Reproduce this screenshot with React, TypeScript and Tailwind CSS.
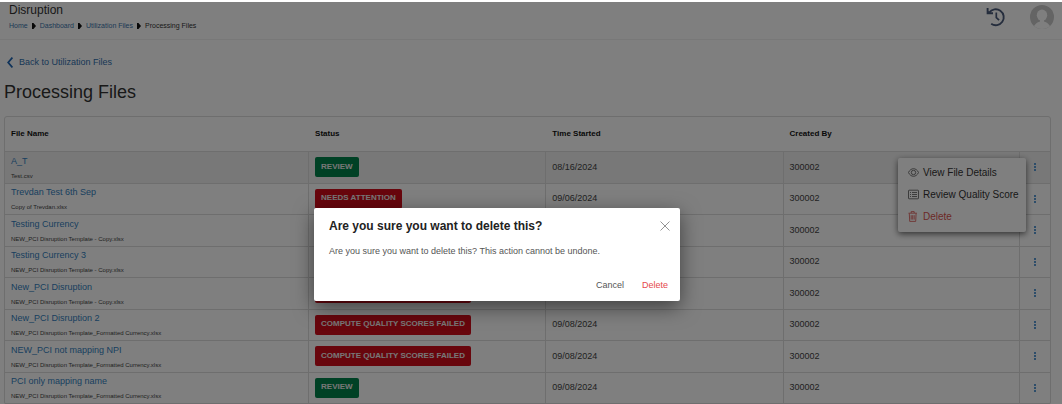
import React from "react";

type Status = "REVIEW" | "NEEDS ATTENTION" | "COMPUTE QUALITY SCORES FAILED";

interface FileRow {
  name: string;
  file: string;
  status?: Status;
  started?: string;
}

const copyFile = "NEW_PCI Disruption Template - Copy.xlsx";
const currencyFile = "NEW_PCI Disruption Template_Formatted Currency.xlsx";

const rows: FileRow[] = [
  { name: "A_T", file: "Test.csv", status: "REVIEW", started: "08/16/2024" },
  { name: "Trevdan Test 6th Sep", file: "Copy of Trevdan.xlsx", status: "NEEDS ATTENTION", started: "09/06/2024" },
  { name: "Testing Currency", file: copyFile },
  { name: "Testing Currency 3", file: copyFile },
  { name: "New_PCI Disruption", file: copyFile, status: "COMPUTE QUALITY SCORES FAILED" },
  { name: "New_PCI Disruption 2", file: currencyFile, status: "COMPUTE QUALITY SCORES FAILED", started: "09/08/2024" },
  { name: "NEW_PCI not mapping NPI", file: currencyFile, status: "COMPUTE QUALITY SCORES FAILED", started: "09/08/2024" },
  { name: "PCI only mapping name", file: currencyFile, status: "REVIEW", started: "09/08/2024" },
];

function HistoryIcon() {
  return (
    <svg viewBox="0 0 20 20" className="h-5 w-5" fill="none" stroke="#4a5b7a" strokeWidth="1.9">
      <path d="M3.200 5.600A8 8 0 1 1 5.200 16.800" />
      <path d="M1.600 1v5.200h5.400" />
      <path d="M1.600 3.200l3 3h-3z" fill="#4a5b7a" stroke="none" />
      <path d="M10.300 5.600v5l2.800 2.600" strokeWidth="1.700" />
    </svg>
  );
}

function Avatar() {
  return (
    <svg viewBox="0 0 24 24" className="h-6 w-6">
      <defs>
        <clipPath id="avatar-clip">
          <circle cx="12" cy="12" r="12" />
        </clipPath>
      </defs>
      <g clipPath="url(#avatar-clip)">
        <rect width="24" height="24" fill="#c8c8c8" />
        <ellipse cx="12" cy="10.200" rx="5.200" ry="5.600" fill="#fff" />
        <path d="M3 24c.6-4 3.500-6.500 7-7.500v-3h4v3c3.500 1 6.400 3.500 7 7.500z" fill="#fff" />
      </g>
    </svg>
  );
}

function Separator() {
  return (
    <svg viewBox="0 0 4 6" className="h-[6px] w-1" aria-hidden="true">
      <path d="M0 0h1.500L4 3 1.500 6H0z" fill="#111" />
    </svg>
  );
}

function EyeIcon() {
  return (
    <svg viewBox="0 0 11 11" className="h-[11px] w-[11px] shrink-0" fill="none" stroke="#555" strokeWidth="0.8">
      <path d="M.4 5.500C1.800 2.900 3.500 1.700 5.500 1.700S9.200 2.900 10.600 5.500C9.200 8.100 7.500 9.300 5.500 9.300S1.800 8.100.4 5.500z" />
      <circle cx="5.500" cy="5.500" r="2.200" />
    </svg>
  );
}

function ListIcon() {
  return (
    <svg viewBox="0 0 11 11" className="h-[11px] w-[11px] shrink-0" fill="none" stroke="#555" strokeWidth="0.8">
      <rect x=".5" y="1.200" width="10" height="8.600" rx=".6" />
      <path d="M2 3.500h1M4 3.500h5M2 5.500h1M4 5.500h5M2 7.500h1M4 7.500h5" />
    </svg>
  );
}

function TrashIcon() {
  return (
    <svg viewBox="0 0 11 11" className="h-[11px] w-[11px] shrink-0" fill="none" stroke="#d9534f" strokeWidth="0.8">
      <path d="M.5 2.200h8.400M3.200 2V.6h3V2M1.300 2.400l.4 8h6l.4-8M3.200 4.200v4.400M4.700 4.200v4.400M6.200 4.200v4.400" />
    </svg>
  );
}

function RowMenu() {
  const item = "flex h-[22px] w-full items-center gap-1 pl-[10px] text-[10px]";
  return (
    <div className="absolute top-[5px] right-6 z-10 w-32 rounded-[2px] bg-white py-1 text-left whitespace-nowrap text-[#333] shadow-[0_2px_6px_rgba(0,0,0,0.6)]">
      <button className={item}><EyeIcon />View File Details</button>
      <button className={item}><ListIcon />Review Quality Score</button>
      <button className={`${item} text-[#d9534f]`}><TrashIcon />Delete</button>
    </div>
  );
}

function FilesTable() {
  const head = "h-[35px] border-b border-[#dcdcdc] pl-[6px] text-left align-middle text-[8px] font-bold text-[#111]";
  const cell = "border-r border-b border-[#dcdcdc] px-[6px] py-0 align-middle";
  return (
    <div className="rounded-[3px] border border-[#dcdcdc]">
      <table className="h-[287px] w-full table-fixed border-separate border-spacing-0">
        <colgroup>
          <col className="w-[29.1%]" />
          <col className="w-[22.7%]" />
          <col className="w-[22.7%]" />
          <col className="w-[22.6%]" />
          <col />
        </colgroup>
        <thead>
          <tr>
            <th className={head}>File Name</th>
            <th className={head}>Status</th>
            <th className={head}>Time Started</th>
            <th className={head}>Created By</th>
            <th className="border-b border-[#dcdcdc]" aria-label="Actions" />
          </tr>
        </thead>
        <tbody>
          {rows.map((row, i) => (
            <tr key={row.name} className={i === 0 ? "bg-[#f1f1f1]" : ""}>
              <td className={cell}>
                <a href="#file" className="block text-[9px] leading-[14px] text-[#337fc0]">{row.name}</a>
                <span className="block pt-[3px] text-[6px] leading-[10px] text-[#444]">{row.file}</span>
              </td>
              <td className={cell}>
                {row.status && (
                  <span
                    className={`flex h-5 w-fit items-center rounded-[2px] px-[6px] pb-px text-[8px] font-bold whitespace-nowrap text-[#eeeeee] ${
                      row.status === "REVIEW" ? "bg-[#00824a]" : "bg-[#d10c1a]"
                    }`}
                  >
                    {row.status}
                  </span>
                )}
              </td>
              <td className={`${cell} text-[9px] text-[#444]`}>{row.started}</td>
              <td className={`${cell} text-[9px] text-[#444]`}>300002</td>
              <td className="border-b border-[#dcdcdc] p-0">
                <div className="relative flex h-[29px] items-center justify-center">
                  <button aria-label={`Actions for ${row.name}`} className="flex flex-col gap-px p-1">
                    <span className="h-[2px] w-[2px] bg-[#5b9bd5]" />
                    <span className="h-[2px] w-[2px] bg-[#5b9bd5]" />
                    <span className="h-[2px] w-[2px] bg-[#5b9bd5]" />
                  </button>
                  {i === 0 && <RowMenu />}
                </div>
              </td>
            </tr>
          ))}
        </tbody>
      </table>
    </div>
  );
}

function DeleteDialog() {
  return (
    <div className="absolute inset-x-0 top-[2px] bottom-0 z-20 flex items-start justify-center bg-black/50 pt-[206px] pr-[68px]">
      <div
        role="dialog"
        aria-labelledby="dialog-title"
        className="w-[366px] rounded-[2px] bg-white pt-[10px] pr-[10px] pb-2 pl-[15px] shadow-[0_6px_20px_rgba(0,0,0,0.5)]"
      >
        <div className="flex items-center justify-between">
          <h2 id="dialog-title" className="text-[12px] leading-4 font-bold text-[#222]">Are you sure you want to delete this?</h2>
          <button aria-label="Close">
            <svg viewBox="0 0 10 10" className="h-[10px] w-[10px]" stroke="#888" strokeWidth="0.9">
              <path d="M.5.5l9 9M9.500.5l-9 9" />
            </svg>
          </button>
        </div>
        <p className="pt-[11px] text-[9px] leading-3 text-[#555]">Are you sure you want to delete this? This action cannot be undone.</p>
        <div className="flex justify-end gap-[18px] pt-5 pr-[2px] text-[9px] leading-4">
          <button className="text-[#555]">Cancel</button>
          <button className="text-[#e5484d]">Delete</button>
        </div>
      </div>
    </div>
  );
}

export default function App() {
  return (
    <div className="relative h-screen overflow-hidden bg-white pt-[2px] font-['Liberation_Sans',Arial,sans-serif] text-[#333]">
      <header className="flex h-[38px] items-start justify-between border-b border-[#f0f0f0] pr-2 pl-[9px]">
        <div>
          <div className="text-[12px] leading-4">Disruption</div>
          <nav aria-label="Breadcrumb" className="flex items-center gap-1 pt-[2px] text-[7px] leading-3 text-[#333]">
            <a href="#home" className="text-[#3a74ab]">Home</a>
            <Separator />
            <a href="#dashboard" className="text-[#3a74ab]">Dashboard</a>
            <Separator />
            <a href="#utilization" className="text-[#3a74ab]">Utilization Files</a>
            <Separator />
            <span>Processing Files</span>
          </nav>
        </div>
        <div className="flex items-center gap-6 pt-[3px]">
          <button aria-label="History"><HistoryIcon /></button>
          <button aria-label="Account"><Avatar /></button>
        </div>
      </header>
      <main className="pr-[11px] pl-1">
        <a href="#utilization" className="flex w-fit items-center gap-[6px] pt-[15px] pl-[3px] text-[9px] leading-[14px] text-[#2f6fae]">
          <svg viewBox="0 0 6 11" className="h-[11px] w-[6px]" fill="none" stroke="#1f66b5" strokeWidth="1.800">
            <path d="M5.400.6L1.200 5.500l4.200 4.900" />
          </svg>
          Back to Utilization Files
        </a>
        <h1 className="pt-[11px] pb-3 text-[18px] leading-6">Processing Files</h1>
        <FilesTable />
      </main>
      <DeleteDialog />
    </div>
  );
}
